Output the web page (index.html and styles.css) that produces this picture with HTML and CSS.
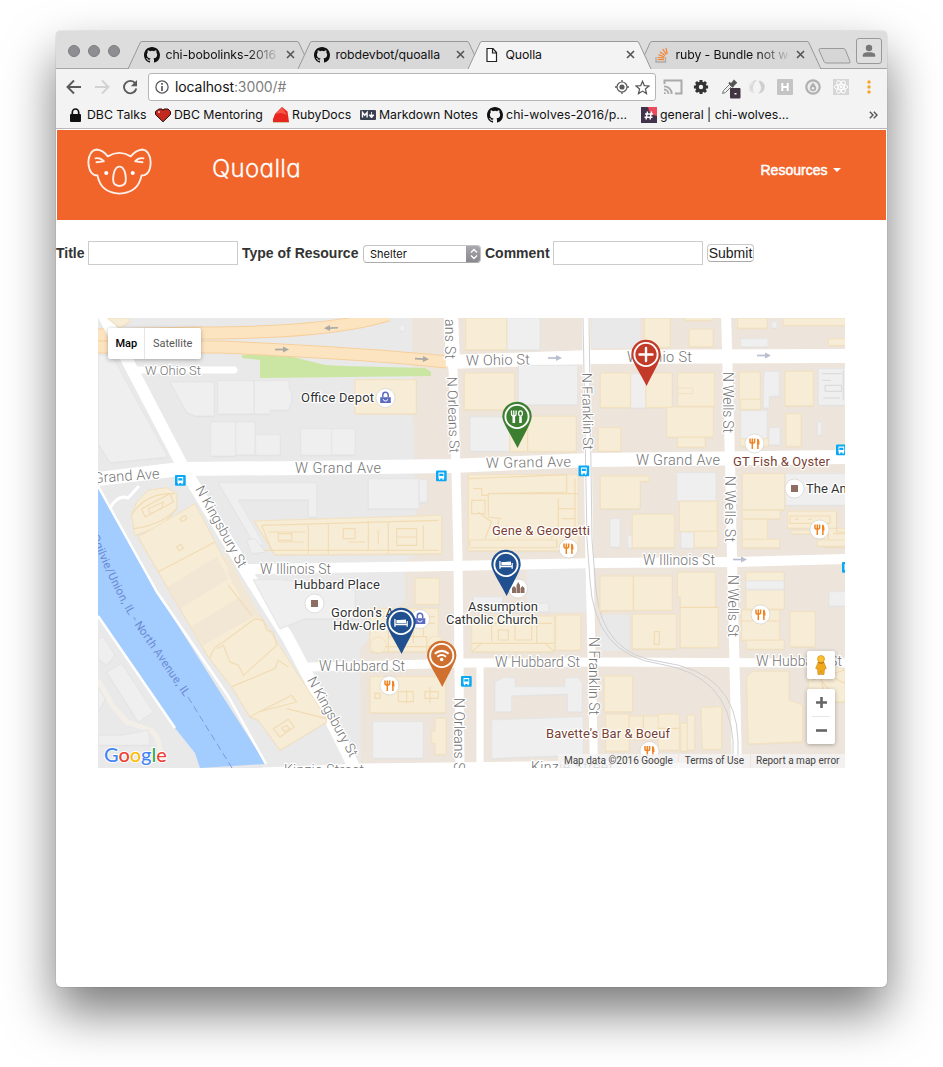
FILE: index.html
```html
<!DOCTYPE html>
<html lang="en">
<head>
<meta charset="utf-8">
<title>Quolla</title>
<link rel="stylesheet" href="styles.css">
</head>
<body>
<svg class="defs" width="0" height="0">
  <defs>
    <symbol id="github" viewBox="0 0 16 16"><path fill="#111" d="M8 0C3.58 0 0 3.58 0 8c0 3.54 2.29 6.53 5.47 7.59.4.07.55-.17.55-.38v-1.49c-2.01.37-2.53-.49-2.69-.94-.09-.23-.48-.94-.82-1.13-.28-.15-.68-.52-.01-.53.63-.01 1.08.58 1.23.82.72 1.21 1.87.87 2.33.66.07-.52.28-.87.51-1.07-1.78-.2-3.64-.89-3.64-3.95 0-.87.31-1.59.82-2.15-.08-.2-.36-1.02.08-2.12 0 0 .67-.21 2.2.82a7.6 7.6 0 0 1 4 0c1.53-1.04 2.2-.82 2.2-.82.44 1.1.16 1.92.08 2.12.51.56.82 1.27.82 2.15 0 3.07-1.87 3.75-3.65 3.95.29.25.54.73.54 1.48v2.2c0 .21.15.46.55.38A8.01 8.01 0 0 0 16 8c0-4.42-3.58-8-8-8z"/></symbol>
    <symbol id="close" viewBox="0 0 9 9"><path d="M1 1l7 7M8 1L1 8" stroke="#555" stroke-width="1.6" fill="none"/></symbol>
    <symbol id="tabshape" viewBox="0 0 184 28"><path d="M0 28L12 2Q12.500 .5 14 .5H169Q170.500 .5 171 2L183 28" stroke="#999" stroke-width="1"/></symbol>
  </defs>
</svg>
<div class="window">
  <div class="tabstrip">
    <div class="lights"><i></i><i></i><i></i></div>
    <div class="tabs">
      <div class="tab"><svg class="shape"><use href="#tabshape"/></svg><svg class="fav"><use href="#github"/></svg><span class="label fade">chi-bobolinks-2016</span><svg class="x"><use href="#close"/></svg></div>
      <div class="tab"><svg class="shape"><use href="#tabshape"/></svg><svg class="fav"><use href="#github"/></svg><span class="label">robdevbot/quoalla</span><svg class="x"><use href="#close"/></svg></div>
      <div class="tab active"><svg class="shape"><use href="#tabshape"/></svg><svg class="fav" viewBox="0 0 16 16"><path d="M3 1.500h6l3.500 4v9H3zM8.500 1.500V6h4" fill="#fff" stroke="#222" stroke-width="1.200"/></svg><span class="label">Quolla</span><svg class="x"><use href="#close"/></svg></div>
      <div class="tab"><svg class="shape"><use href="#tabshape"/></svg><svg class="fav" viewBox="0 0 16 16"><path d="M2 10v5h9.500v-5" fill="none" stroke="#aaa" stroke-width="1.300"/><path d="M3.500 12.700h6.500M3.600 10.300l6.500.9M4.400 7.600l6 2.200M6 4.700l5.200 3.900M8.700 2.200l3.600 5.200M12 .8l1.200 6" stroke="#f08a3c" stroke-width="1.300"/></svg><span class="label fade">ruby - Bundle not wo</span><svg class="x"><use href="#close"/></svg></div>
    </div>
    <svg class="newtab" viewBox="0 0 34 16"><path d="M2.500 .5H25q2 0 2.500 1.500L32 13.500q.5 1.500-1 1.500H8.500q-2 0-2.500-1.500L1 2Q.8.500 2.500.5z" fill="#d6d6d6" stroke="#999"/></svg>
    <div class="profile"><svg viewBox="0 0 14 14"><circle cx="7" cy="4" r="3.200" fill="#777"/><path d="M.8 12.700v-1.500C1 8.500 4.500 8.300 7 8.300s6 .2 6.200 2.900v1.500z" fill="#777"/></svg></div>
  </div>
  <div class="toolbar">
    <svg class="nav" viewBox="0 0 16 16"><path d="M15 8H2M8 1.500L1.500 8 8 14.500" fill="none" stroke="#5a5a5a" stroke-width="1.900"/></svg>
    <svg class="nav" viewBox="0 0 16 16"><path d="M1 8h13M8 1.500L14.500 8 8 14.500" fill="none" stroke="#d2d2d2" stroke-width="1.900"/></svg>
    <svg class="nav" viewBox="0 0 16 16"><path d="M13.300 4.500A6.200 6.200 0 1 0 14.300 9.500" fill="none" stroke="#5a5a5a" stroke-width="1.900"/><path d="M15 1v6.200H8.800z" fill="#5a5a5a"/></svg>
    <div class="omnibox">
      <svg width="14" height="14" viewBox="0 0 14 14"><circle cx="7" cy="7" r="6.100" fill="none" stroke="#5a5a5a" stroke-width="1.300"/><path d="M7 3v1.700M7 6v5" stroke="#5a5a5a" stroke-width="1.700"/></svg>
      <span class="url">localhost<em>:3000/#</em></span>
      <svg width="14" height="14" viewBox="0 0 14 14"><circle cx="7" cy="7" r="5" fill="none" stroke="#5a5a5a" stroke-width="1.200"/><circle cx="7" cy="7" r="2.600" fill="#5a5a5a"/><path d="M7 0v2M7 12v2M0 7h2M12 7h2" stroke="#5a5a5a" stroke-width="1.300"/></svg>
      <svg width="15" height="15" viewBox="0 0 15 15"><path d="M7.500 1.300l1.800 4.300 4.700.4-3.600 3 1.100 4.600-4-2.500-4 2.500 1.100-4.600L1 6l4.700-.4z" fill="none" stroke="#555" stroke-width="1.200"/></svg>
    </div>
    <div class="ext">
      <svg width="20" height="16" viewBox="0 0 20 16"><path d="M1.500 5V1.500h17v13H12" fill="none" stroke="#aaa" stroke-width="2"/><path d="M1 7.300A7.500 7.500 0 0 1 8.700 15M1 10.500A4.500 4.500 0 0 1 5.500 15" fill="none" stroke="#aaa" stroke-width="1.800"/><path d="M1 13a2 2 0 0 1 2 2H1z" fill="#aaa"/></svg>
      <svg width="16" height="16" viewBox="0 0 16 16"><circle cx="8" cy="8" r="3.900" fill="none" stroke="#333" stroke-width="3.400"/><g stroke="#333" stroke-width="3"><path d="M8 .9v2.500M8 12.600v2.500M.9 8h2.500M12.600 8h2.500M3 3l1.800 1.800M11.200 11.200L13 13M13 3l-1.800 1.800M4.800 11.200L3 13"/></g></svg>
      <svg width="20" height="20" viewBox="0 0 20 20"><path d="M1.500 14.500l1-3 6-6 2 2-6 6z" fill="#eee" stroke="#777"/><path d="M8 3.500l4.500 4.500M10 5.500l3-3.700 2 2-3.600 3.300z" fill="#555" stroke="#555" stroke-width="1.800"/><rect x="9" y="9" width="10.500" height="10.500" rx="1" fill="#413542"/><rect x="13.500" y="14" width="2" height="1.500" fill="#fff"/></svg>
      <svg width="16" height="16" viewBox="0 0 16 16"><path d="M8 1A7 7 0 0 0 5 14.300Q1.500 7 8 1z" fill="#d9d9d9"/><path d="M9.500 1.500A6.500 6.500 0 0 1 9 14.500Q12.500 12 12 7.500z" fill="#cfcfcf"/><path d="M4 4a4.500 4.500 0 0 0 1.500 9" fill="none" stroke="#e5e5e5" stroke-width="2"/></svg>
      <svg width="16" height="16" viewBox="0 0 16 16"><rect width="16" height="16" rx="1" fill="#c4c4c4"/><path d="M5.300 4v8M10.700 4v8M5 8h6" stroke="#fff" stroke-width="2"/></svg>
      <svg width="16" height="16" viewBox="0 0 16 16"><circle cx="8" cy="8" r="6.700" fill="#eee" stroke="#b0b0b0" stroke-width="2.200"/><path d="M8 3.500q3.200 3.800 3.200 5.500a3.200 3.200 0 0 1-6.400 0Q4.800 7.300 8 3.500z" fill="#b0b0b0"/><circle cx="8" cy="9.300" r="1.300" fill="#eee"/></svg>
      <svg width="16" height="16" viewBox="0 0 16 16"><rect width="16" height="16" fill="#d6d6d6"/><g fill="none" stroke="#fff"><ellipse cx="8" cy="8" rx="6.800" ry="2.600"/><ellipse cx="8" cy="8" rx="6.800" ry="2.600" transform="rotate(60 8 8)"/><ellipse cx="8" cy="8" rx="6.800" ry="2.600" transform="rotate(120 8 8)"/></g><circle cx="8" cy="8" r="1.400" fill="#fff"/></svg>
    </div>
    <svg class="menu" width="4" height="14" viewBox="0 0 4 14"><g fill="#f5a623"><circle cx="2" cy="2" r="1.700"/><circle cx="2" cy="7" r="1.700"/><circle cx="2" cy="12" r="1.700"/></g></svg>
  </div>
  <div class="bookmarks">
    <div class="bm"><svg viewBox="0 0 16 16"><rect x="2" y="7" width="11" height="8" rx="1" fill="#111"/><path d="M4.300 8V5.500a3.200 3.500 0 0 1 6.400 0V8" fill="none" stroke="#111" stroke-width="1.700"/></svg><span>DBC Talks</span></div>
    <div class="bm"><svg viewBox="0 0 16 16"><path d="M4 2h3l1 1.500L9 2h4l2.500 2.500v3L8 14.800.5 7.500v-3z" fill="#c22a20" stroke="#2a0a08"/><path d="M3 4h2v2H3z" fill="#f29a90"/></svg><span>DBC Mentoring</span></div>
    <div class="bm"><svg viewBox="0 0 16 16"><path d="M9 0l5.500 4.500L16 15H0v-3l2-5z" fill="#e8251f"/><path d="M9 0l-7 7 6-1 6 2z" fill="#f5554a"/><path d="M0 15.500h16" stroke="#cfc79f"/></svg><span>RubyDocs</span></div>
    <div class="bm"><svg viewBox="0 0 16 16"><rect y="3" width="16" height="10" rx="1" fill="#3a4252"/><path d="M2.500 10.500v-5l2.300 2.700 2.300-2.700v5" fill="none" stroke="#fff" stroke-width="1.400"/><path d="M11.500 5v4M9 8h5l-2.500 3z" fill="#fff" stroke="#fff" stroke-width=".8"/></svg><span>Markdown Notes</span></div>
    <div class="bm"><svg><use href="#github"/></svg><span class="wide">chi-wolves-2016/p...</span></div>
    <div class="bm"><svg viewBox="0 0 16 16"><rect width="16" height="16" fill="#43324b"/><path d="M7 0h9v9q-8-1-9-9z" fill="#ec4b5d"/><path d="M6.500 4.500l-1.500 8M10.500 4.500l-1.500 8M4 7h8M3.500 10.200h8" stroke="#fff" stroke-width="1.400"/></svg><span>general | chi-wolves...</span></div>
    <svg class="more" width="9" height="8" viewBox="0 0 9 8"><path d="M.8.800L4 4 .8 7.200M4.800.8L8 4 4.800 7.200" fill="none" stroke="#555" stroke-width="1.400"/></svg>
  </div>
  <header class="site-header">
    <svg class="koala" viewBox="0 0 66 50"><g fill="none" stroke="#fff" stroke-width="1.900" stroke-linecap="round" stroke-linejoin="round" opacity=".9"><path d="M21 8.500Q33 1.500 44.500 8.500Q50 2 56.500 1.500Q64 2.500 64.800 14.500Q64.500 28 55.500 28Q52 46 33 46.500Q14 46 10.500 28Q2 28 1.200 14.500Q2 2.500 9.500 1.500Q16 2 21 8.500z"/><path d="M33 19c5 0 6.500 8 6.500 13s-2.500 6.800-6.500 6.800-6.500-1.800-6.500-6.800S28 19 33 19z"/><path d="M8.500 10.500q5-1 8.500 3M9.500 14.500q3.500 0 7-.8M57.500 10.500q-5-1-8.500 3M56.500 14.500q-3.500 0-7-.8"/></g><circle cx="19.500" cy="25.500" r="2.100" fill="#fff"/><circle cx="46.500" cy="25.500" r="2.100" fill="#fff"/></svg>
    <h1 class="brand">Quoalla</h1>
    <a class="dropdown">Resources <b class="caret"></b></a>
  </header>
  <form class="resource-form">
    <label class="title">Title</label><input type="text" class="field">
    <label>Type of Resource</label><div class="select"><span>Shelter</span><i><svg width="8" height="12" viewBox="0 0 8 12"><path d="M1 4.500l3-3 3 3M1 7.500l3 3 3-3" fill="none" stroke="#fff" stroke-width="1.300"/></svg></i></div>
    <label class="comment">Comment</label><input type="text" class="field">
    <button type="button" class="submit">Submit</button>
  </form>
  <div class="map">
    <svg class="tiles" viewBox="98 318 747 450">
      <defs>
        <g id="bus"><rect width="10.700" height="10.700" rx="1" fill="#0ba9f5"/><path d="M2.500 2h5.700v6H2.500zM3 8h1.200v1.200H3zM6.500 8h1.200v1.200H6.500z" fill="#fff"/><path d="M3.300 3.200h4.100v2.300H3.300z" fill="#0ba9f5"/></g>
        <g id="food"><circle r="9.500" fill="#fff" class="poi"/><path d="M-4.500-5v3.300q0 1.400 2.300 1.400T.1-1.700V-5M-2.200-5V5.500M3.400 5.500V-4.200" fill="none" stroke="#ee8322" stroke-width="1.500"/><path d="M2.700-5q2.500.5 2.300 6H2.700z" fill="#ee8322"/></g>
        <g id="place"><circle r="9.500" fill="#fff" class="poi"/><rect x="-3.500" y="-3.500" width="7" height="7" fill="#8d6e63"/></g>
        <g id="shop"><circle r="9.500" fill="#fff" class="poi"/><path d="M-5.300-.8H5.300V5H-5.300z" fill="#5c6bc0"/><path d="M-2.700-1v-2a2.700 2.700 0 0 1 5.400 0v2" fill="none" stroke="#5c6bc0" stroke-width="1.500"/><path d="M-2.200 1.200a2.200 1.800 0 0 0 4.400 0" fill="none" stroke="#fff"/></g>
        <g id="arrow"><path d="M-7 0H2" stroke="currentColor" stroke-width="1.700"/><path d="M1-3L7 0 1 3z" fill="currentColor"/></g>
        <g id="pin"><path d="M-14.700 0A14.700 14.700 0 1 1 14.700 0C14.700 6 7 18 .6 31.500C-6 18-14.700 6-14.700 0z"/><circle r="11.600" fill="none" stroke="#fff" stroke-width="1.900"/></g>
        <g id="bed" fill="#fff" stroke="none"><path d="M-6.700-3.500h1.300V1.200H5.600V-1.500H6.800V4.200H5.600V2.800H-5.400V4.200H-6.700z"/><path d="M-4.600-2.500h3L5-3V.7H-4.600z"/></g>
        <path id="river-route" d="M91 536Q116 598 138 630T192 708"/>
      </defs>
      <path class="base" d="M98 318h747v450H98z"/>
      <path class="district" d="M412 318H845V768H361L360 648 405 600 404 562 416 555V510L414 455 412 385z"/>
      <path class="base" d="M527 564h62v48h-62zM592 318h48v30h-48zM600 615h29v36h-29z"/>
      <path d="M98 486L128 540 157 592 225 700 266 764 200 768 195 753 175 728 98 616z" fill="#a3ccff"/>
      <path d="M188 697L232 768" stroke="#7c9ae6" stroke-dasharray="7 4" fill="none"/>
      <path d="M98 486L128 540 157 592 228 696 266 764M98 616L175 728" class="path"/>
      <path d="M98 680L112 705 127 722 148 729Q160 735 160 752" fill="none" stroke="#f3efe8" stroke-width="5"/>
      <path d="M242 355H285L325 365 345 366 425 368 431 372V376L260 378V360L242 358z" fill="#cbe6a3"/>
      <g class="hw-edge"><path d="M98 335L200 333Q330 333 388 315M98 347H220Q355 353 447 362"/></g>
      <g class="hw"><path d="M98 335L200 333Q330 333 388 315M98 347H220Q355 353 447 362"/></g>
      <g class="roads">
        <path d="M448 362L590 357 845 356" stroke-width="14"/>
        <path d="M98 479L180 469 300 468 450 466 590 460 845 457" stroke-width="14"/>
        <path d="M248 569L450 566 600 563 735 562 845 559" stroke-width="10"/>
        <path d="M308 667L470 663 600 662 845 663" stroke-width="9"/>
        <path d="M262 772L362 768 600 765 740 769" stroke-width="9"/>
        <path d="M102 312L182 465 250 578 288 638 318 695 358 775" stroke-width="12"/>
        <path d="M451 312L453 366" stroke-width="14"/><path d="M453 366L456 470 458 560 460 768" stroke-width="9"/>
        <path d="M480 665V768" stroke-width="7"/>
        <path d="M586 312L589 540 594 768" stroke-width="8"/>
        <path d="M726 312L730 460 732 560 737 768" stroke-width="10"/>
        <path d="M137 370H234" stroke-width="7" stroke-linecap="round"/>
        <path d="M110 508Q118 494 128 498L139 486" stroke-width="3"/>
      </g>
      <path class="rail" d="M583 318L587 540 590 580Q594 655 660 664 728 675 733 740V768M589 318L592 540 596 590Q602 655 662 662 736 672 738 740V768"/>

      <g transform="translate(95 312) scale(.33333)">
        <g class="gray"><path d="M10 130H50L218 435 45 452 10 395zM225 210H358V312H300L275 300zM368 206h110v100H368zM478 206H583V235L590 240V265L580 295H525V306H478zM347 330h75v102h-75zM422 330h58v98h-58zM482 368h74v62h-74zM617 350h158v80H617zM370 512H665V615H640V563H430L507 700H480z"/></g>
        <g class="beige"><path d="M38 18H98L105 28 75 48z"/><path d="M478 627L1040 610V725L540 728z"/><path d="M110 610L125 570 160 535 215 527 245 545V590L200 640 120 670z"/><path d="M130 675L300 575 399 765 692 1215 695 1230 555 1314 490 1224 465 1214 410 1124 340 1034 190 779z"/></g>
        <g fill="#f2e6d4"><path d="M220 824L365 734 400 800 255 890zM290 944L445 849 475 914 325 1000zM385 700L440 810 500 920 470 910 400 790z"/></g>
        <g class="detail"><path d="M190 779L360 690M345 1040Q350 1005 385 990L480 920 505 925 515 955 535 960 545 1000 445 1090 430 1060 405 1050 385 1000 365 1010M400 820L470 910M410 1124L540 1070 550 1045 580 1065M465 1214L590 1150 605 1170 490 1200M575 1190L695 1220M535 1250L580 1222 598 1245 555 1275zM560 1248l15-8 8 10-15 9zM255 620l15-10 6 10-16 9zM245 705l12-9 8 12-12 9z"/><path d="M110 610Q150 540 240 545M140 590L225 545 235 570 150 615zM160 590L205 570 200 590 165 605zM115 650Q200 640 245 590"/><path d="M500 640L1030 625M500 640L530 715M500 715H1030M640 635V725M700 632V725M745 650h35v30h-35zM820 628V715M880 628V725M905 650h60v50h-60zM985 640v70M630 660H520M625 690H550M760 690h50M850 655v40M905 675h60M590 665h-40v20h40z"/></g>
        <g class="gray"><path d="M10 980L25 975 60 1030 35 1060 10 1040zM35 1080L80 1055 175 1200 130 1230zM10 1130L30 1160 10 1200zM10 1270H80L160 1255 165 1300H10zM475 803H560L780 830V920H630L555 950zM455 685L480 680 510 720 470 725z"/></g>
      </g>
      <g transform="translate(345 312) scale(.33333)">
        <g class="gray"><path d="M485 18h100v95H485zM520 160h178v118H520zM375 315h120v103H375zM70 500h152v90H70zM222 503h25v68h-25zM-40 350h70v78h-70z"/><circle cx="171" cy="48" r="10"/></g>
        <g class="beige"><path d="M30 203h183v102H30zM362 18h123v95H362zM358 183h150v110H358zM495 313h198v105H495zM370 488h330v228H370z"/></g>
        <g class="detail"><path d="M548 313V418M370 500L665 488V540L430 545V615L470 620M385 530h25v20h20M380 565h40v40h-40zM400 600l40 30-20 50M430 545H700M460 625V705H620V670H700M640 560V670M690 500v150M370 690H460M640 590h50M650 620h40"/></g>
      </g>
      <g transform="translate(595 312) scale(.33333)">
        <g class="gray"><path d="M107 185h46v103h-46zM245 482h118v85H245zM258 658h40v50h-40zM45 620h30v85H45zM98 670h14v38H98zM437 80h82v24h-82zM530 28h16v20h-16zM508 178h45v75h-30v35h-18v-35zM437 295h80v85h-80zM522 347h33v52h-33zM667 330h13v40h-13zM570 485h185v95H570zM670 170h85v110h-85z"/></g>
        <g class="beige"><path d="M148 18h77v88h-77zM282 52h72v52h-72zM270 14h82v11h-82zM16 183h90v103H16zM153 183h78v103h-78zM248 183H358V282H248V228H293V245H248zM215 285h140v90H215zM247 375h83v30h-83zM10 347h67v70H10zM16 492H163V507H135V590H16zM253 568h113v90H253zM298 658h70v48h-70zM112 607h126v100H112zM428 18h88v30h-88zM565 18h190v22H565zM700 80h55v20h-55zM433 180h62v82h-62zM437 262h60v30h-60zM570 178h85v103h-85zM573 305h45v98h-45zM437 380h83v22h-83zM442 485h127v108H442zM442 595h113v25H442zM442 622h75v60h-75zM442 682h112v25H442zM578 598h147v50H578zM688 650h67v55h-67zM590 655h90v10h-90z"/></g>
        <g class="detail"><path d="M585 612h120v22H585zM600 622h10M640 622h10M700 660v45M725 600v60h30M715 665h40"/></g>
        <path class="roof" d="M682 185h58M682 205h25M690 220h50v18h-50zM685 258h50M745 175v90"/>
      </g>
      <g transform="translate(345 540) scale(.33333)">
        <g class="gray"><path d="M83 545h152v110H83zM385 170h88v20h138v25H385zM450 425L480 412 510 415V440H660V415L700 412 712 430V515H667V462L500 467V515H450zM440 540L715 530V645L440 655z"/></g>
        <g class="beige"><path d="M375 0H635V22H375zM210 115h73v78h-73zM75 205H280V310L295 320 280 335H75L75 300zM75 410H302V518H75zM270 535H303V643H270V610H260V575H270zM380 228H628V335H380zM632 225h75v105h-75zM765 108h20v105h-20z"/><circle cx="100" cy="315" r="24"/><circle cx="272" cy="312" r="24"/></g>
        <g class="detail"><path d="M120 320H255M90 230H270M90 250H270M130 340V290H245V340M130 240v50M170 270v40M205 270v40M235 240v50M380 310H628M390 250H620M440 235v70M510 250h50v50h-50zM460 270h30v30h-30zM575 240v70M380 335L410 310M628 335L600 310M90 460h15v15H90zM160 455h45v30h-45zM185 450v40M240 455h40v20h-40zM255 440v50M635 0V22"/></g>
      </g>
      <g transform="translate(595 540) scale(.33333)">
        <g class="beige"><path d="M15 108h217v103H15zM247 97H361V202H370V322H256V170H247zM112 223h132v103H112zM453 97h114v110H453zM440 210h113v90H440zM455 300h112v27H455zM585 215h75v105h-75zM455 410L475 394H582V480L623 495V605L460 612zM640 390L700 370 750 390V485H640zM28 408h85v107H28zM32 523h70v110H32zM102 528h88v70h-88zM190 523h63v107h-63zM257 550h20v83h-20zM277 525h22v105h-22zM318 503L380 500V628H322zM667 0h85v18h-85z"/></g>
        <g class="gray"><path d="M453 123h114v25H453zM702 155h50v43h-50z"/></g>
        <g class="detail"><path d="M115 108V211M256 202H370M178 275h15v38h-15zM440 243H553M500 210v33M145 528v60M190 565h63M700 380q-40 40 0 90M680 380q40 40 70 50M650 420l100-30M660 400l60 70"/></g>
      </g>

      <g color="#aaa9a4">
        <use href="#arrow" transform="translate(331 328) rotate(178)"/><use href="#arrow" transform="translate(282 349.500)"/><use href="#arrow" transform="translate(422 359) rotate(3)"/>
      </g>
      <g color="#b9bfce"><use href="#arrow" transform="translate(555 358)"/><use href="#arrow" transform="translate(764 355.500)"/><use href="#arrow" transform="translate(740 559.500)"/></g>

      <g class="street">
        <text x="145" y="374.500" class="s" textLength="56">W Ohio St</text>
        <text x="466" y="365.500" textLength="64" transform="rotate(-1 466 365)">W Ohio St</text>
        <text x="627" y="362" textLength="65">W Ohio St</text>
        <text x="94" y="483" textLength="66" transform="rotate(-4 94 483)">Grand Ave</text>
        <text x="295" y="473" textLength="86">W Grand Ave</text>
        <text x="486" y="468" textLength="85" transform="rotate(-1 486 468)">W Grand Ave</text>
        <text x="636" y="465" textLength="84">W Grand Ave</text>
        <text x="260" y="574" class="m" textLength="71">W Illinois St</text>
        <text x="643" y="565" class="m" textLength="72">W Illinois St</text>
        <text x="319" y="670.500" class="m" textLength="86">W Hubbard St</text>
        <text x="495" y="667" class="m" textLength="85">W Hubbard St</text>
        <text x="756" y="666" class="m" textLength="86">W Hubbard St</text>
        <text x="284" y="775" class="m" textLength="80">Kinzie Street</text>
        <text x="531" y="771.500" class="m" textLength="82">Kinzie Street</text>
        <text transform="translate(445 319) rotate(90)" class="m" textLength="40">ans St</text>
        <text transform="translate(447 377) rotate(88)" class="m" textLength="76">N Orleans St</text>
        <text transform="translate(454 698) rotate(90)" class="m" textLength="77">N Orleans St</text>
        <text transform="translate(582 373) rotate(89)" class="m" textLength="77">N Franklin St</text>
        <text transform="translate(589 637) rotate(90)" class="m" textLength="78">N Franklin St</text>
        <text transform="translate(723 372) rotate(90)" class="m" textLength="61">N Wells St</text>
        <text transform="translate(725 476) rotate(90)" class="m" textLength="66">N Wells St</text>
        <text transform="translate(728 575) rotate(90)" class="m" textLength="62">N Wells St</text>
        <text transform="translate(195 489) rotate(61)" class="m" textLength="91">N Kingsbury St</text>
        <text transform="translate(307 680) rotate(61)" class="m" textLength="89">N Kingsbury St</text>
      </g>
      <text class="river"><textPath href="#river-route" textLength="187">Ogilvie/Union, IL - North Avenue, IL</textPath></text>

      <use href="#bus" x="175" y="475"/><use href="#bus" x="436" y="470.500"/><use href="#bus" x="578.500" y="465.500"/><use href="#bus" x="836" y="444.500"/><use href="#bus" x="461" y="676"/><use href="#bus" x="842" y="562"/>
      <use href="#food" x="754.500" y="443.500"/><use href="#food" x="819.500" y="529.500"/><use href="#food" x="568.500" y="548.500"/><use href="#food" x="389.500" y="685.500"/><use href="#food" x="760.500" y="614.500"/><use href="#food" x="649.500" y="751"/>
      <use href="#place" x="794.500" y="488.500"/><use href="#place" x="314.500" y="603.500"/>
      <use href="#shop" x="385.500" y="398"/><use href="#shop" x="420" y="619"/>
      <circle cx="518" cy="588.500" r="9.500" fill="#fff" class="poi"/><path d="M512 593v-5l2-2 2 2v5zM516.500 593v-8l1.700-3 1.800 3v8zM520.500 593v-5l2-2 2 2v5z" fill="#8d6e63"/>

      <g class="biz">
        <text x="301" y="402" textLength="73">Office Depot</text>
        <text x="294" y="589" textLength="86">Hubbard Place</text>
        <text x="331" y="616.500" textLength="63">Gordon's A</text>
        <text x="333" y="629.500" textLength="53">Hdw-Orle</text>
        <text x="468" y="610.500" textLength="70">Assumption</text>
        <text x="446" y="623.500" textLength="92">Catholic Church</text>
        <text x="806" y="493">The An</text>
      </g>
      <g class="biz eat">
        <text x="733" y="465.500" textLength="97">GT Fish &amp; Oyster</text>
        <text x="492" y="535" textLength="98">Gene &amp; Georgetti</text>
        <text x="546" y="738" textLength="124">Bavette's Bar &amp; Boeuf</text>
      </g>

      <g transform="translate(517 416.500)" fill="#3d7f31"><use href="#pin"/><g stroke="#fff" fill="none" stroke-width="1.300"><path d="M-5.500-6v3.500q0 2 2.300 2t2.300-2V-6M-3.200-6V-1"/><path d="M-3.200-.5V6.500" stroke-width="2.600"/><ellipse cx="3.500" cy="-3" rx="1.900" ry="2.700"/><path d="M3.500 0V6.500" stroke-width="2.600"/></g></g>
      <g transform="translate(646 354.500)" fill="#c33a28"><use href="#pin"/><path d="M-6.500 0H6.500M0-6.500V6.500" stroke="#fff" stroke-width="2.400" stroke-linecap="round"/></g>
      <g transform="translate(506 564.500)" fill="#20508f"><use href="#pin"/><use href="#bed"/></g>
      <g transform="translate(401 622.500)" fill="#20508f"><use href="#pin"/><use href="#bed"/></g>
      <g transform="translate(441.700 655.500)" fill="#d0702e"><use href="#pin"/><path d="M-7-1.800Q0-7.500 7-1.800M-4.300 1.200Q0-2.200 4.300 1.200" fill="none" stroke="#fff" stroke-width="2"/><circle cy="4" r="1.800" fill="#fff"/></g>
    </svg>
    <div class="maptype"><span class="on">Map</span><span>Satellite</span></div>
    <div class="google"><span class="gb">G</span><span class="gr">o</span><span class="gy">o</span><span class="gb">g</span><span class="gg">l</span><span class="gr">e</span></div>
    <div class="controls">
      <div class="pegman"><svg width="12" height="20" viewBox="0 0 12 20"><path d="M3 7.500H9L11.300 13.500 9.500 14 9 19.500H6.500L6 15.500 5.500 19.500H3L2.500 14 .7 13.500z" fill="#f0a81c" stroke="#c98512" stroke-width=".6"/><circle cx="6" cy="4" r="3.500" fill="#fbc02d" stroke="#c98512" stroke-width=".6"/><path d="M3 7.300Q6 9.500 9 7.300" fill="none" stroke="#b2700a"/></svg></div>
      <div class="zoom"><svg width="28" height="27" viewBox="0 0 28 27"><path d="M9 13.500h11M14.500 8v11" stroke="#666" stroke-width="2.600"/></svg><hr><svg width="28" height="27" viewBox="0 0 28 27"><path d="M9 13.500h11" stroke="#666" stroke-width="2.600"/></svg></div>
    </div>
    <div class="credits"><span>Map data ©2016 Google</span><span>Terms of Use</span><span>Report a map error</span></div>
  </div>
</div>
</body>
</html>
```

FILE: styles.css
```css
* { box-sizing: border-box; }
html, body { margin: 0; }
body { width: 943px; height: 1067px; background: #fff; overflow: hidden; padding: 31px 0 0 56px; font-family: "Liberation Sans", Arial, sans-serif; }
.defs { position: absolute; }
svg { flex: none; display: block; }
.window { width: 831px; height: 956px; background: #fff; border-radius: 5px; box-shadow: 0 0 1px rgba(0,0,0,.5), 0 25px 50px rgba(0,0,0,.53); display: flex; flex-direction: column; }

/* browser chrome */
.tabstrip { height: 38px; background: #dddddd; border-radius: 5px 5px 0 0; border-bottom: 1px solid #a5a5a5; display: flex; align-items: flex-start; flex: none; }
.lights { display: flex; gap: 8px; padding: 14px 0 0 12px; width: 72px; }
.lights i { width: 12px; height: 12px; border-radius: 50%; background: #8e8d92; border: 1px solid #7d7c81; }
.tabs { display: flex; padding-top: 9.500px; }
.tab { position: relative; width: 184px; height: 28px; margin-right: -14px; display: flex; align-items: center; padding: 0 17px 0 16px; flex: none; }
.tab:last-child { margin-right: 0; }
.tab .shape { position: absolute; left: 0; top: 0; width: 184px; height: 28px; fill: #d8d8d8; }
.tab.active { z-index: 2; }
.tab.active .shape { fill: #f3f3f3; }
.tab.active::after { content: ""; position: absolute; left: 1px; right: 2px; bottom: -1px; height: 2px; background: #f3f3f3; }
.fav { width: 16px; height: 16px; position: relative; }
.label { position: relative; margin-left: 5.500px; width: 117px; height: 18px; font: 12.300px/18px Inter, sans-serif; letter-spacing: -.1px; color: #111; white-space: nowrap; overflow: hidden; margin-right: 7px; }
.label.fade { -webkit-mask-image: linear-gradient(90deg, #000 72%, transparent 102%); mask-image: linear-gradient(90deg, #000 72%, transparent 102%); }
.tab .x { position: relative; width: 9px; height: 9px; }
.newtab { width: 34px; height: 16px; margin: 17px 0 0 -4px; }
.profile { width: 26px; height: 26px; margin: 7px 0 0 4px; border: 1px solid #999; border-radius: 3px; background: #dfdfdf; display: flex; align-items: center; justify-content: center; }
.profile svg { width: 14px; height: 14px; }
.toolbar { height: 34px; background: #f3f3f3; display: flex; align-items: center; padding: 2px 0 0 10px; flex: none; }
.nav { width: 16px; height: 16px; margin-right: 12px; }
.omnibox { width: 508px; height: 28px; margin-left: -2px; border: 1px solid #b5b5b5; border-radius: 3px; background: #fff; display: flex; align-items: center; padding: 0 5px 0 6px; gap: 6px; }
.url { flex: 1; font: 14px/20px Inter, sans-serif; color: #111; letter-spacing: -.1px; }
.url em { font-style: normal; color: #808080; }
.ext { display: flex; align-items: center; gap: 12px; margin-left: 7px; }
.ext svg:nth-child(2) { margin-left: -2px; }
.ext svg:nth-child(3) { margin: 4px -4px 0 0; }
.menu { margin-left: 18px; }
.bookmarks { height: 26px; background: #f3f3f3; border-bottom: 1px solid #b9b9b9; display: grid; grid-template-columns: 87px 118px 87px 127px 154px 228px auto; align-items: center; padding: 0 0 1px 12px; flex: none; }
.bm { display: flex; gap: 3px; align-items: center; font: 12.300px/18px Inter, sans-serif; color: #111; white-space: nowrap; }
.bm svg { width: 16px; height: 16px; }
.bm .wide { letter-spacing: .1px; }
.more { margin-left: -.5px; }

/* site header */
.site-header { height: 90px; margin: 1px 1px 0; background: #f1652a; display: flex; align-items: flex-start; flex: none; color: #fff; }
.koala { width: 65px; height: 49px; margin: 18px 1px 0 29.500px; }
.brand { margin: 22px 0 0 59.500px; width: 400px; font: 300 24px/34px Inter, sans-serif; font-feature-settings: "cv11"; letter-spacing: .35px; -webkit-text-stroke: .3px #fff; }
.dropdown { margin: 30px 0 0 148.500px; font-size: 14px; line-height: 20px; -webkit-text-stroke: .5px #fff; display: flex; align-items: center; white-space: nowrap; }
.caret { margin-left: 6px; border-top: 4px solid #fff; border-left: 4px solid transparent; border-right: 4px solid transparent; }

/* form */
.resource-form { height: 24px; margin-top: 21px; display: flex; align-items: center; gap: 4px; font-size: 14px; flex: none; }
.resource-form label { font-weight: bold; color: #333; white-space: nowrap; width: 117px; }
.resource-form .title { width: 28px; }
.resource-form .comment { width: 64px; }
.field { width: 150px; height: 24px; border: 1px solid #ccc; padding: 0; background: #fff; }
.select { width: 118px; height: 18px; margin-top: 2px; border: 1px solid #c4c4c4; border-bottom-color: #aaa; border-radius: 4px; display: flex; overflow: hidden; font: 11px/16px Inter, sans-serif; color: #111; }
.select span { flex: 1; padding-left: 6px; }
.select i { width: 15px; margin: -1px; height: 18px; background: linear-gradient(#aaaab0, #86868c); display: flex; align-items: center; justify-content: center; }
.submit { width: 47px; height: 18px; padding: 0; border: 1px solid #c8c8c8; border-bottom-color: #aaa; border-radius: 4px; background: #fff; font: 14px/16px "Liberation Sans", sans-serif; color: #222; }

/* map */
.map { position: relative; width: 747px; height: 450px; margin: 53px 0 0 42px; overflow: hidden; flex: none; }
.tiles { width: 747px; height: 450px; font-family: Roboto, sans-serif; }
.base { fill: #e9e9e9; }
.district { fill: #ede5db; }
.path { fill: none; stroke: #fff; stroke-width: 2.500; }
.hw-edge { fill: none; stroke: #f6cf9b; stroke-width: 13; }
.hw { fill: none; stroke: #fde4c1; stroke-width: 11; }
.roads { fill: none; stroke: #fff; stroke-linejoin: round; }
.rail { fill: none; stroke: #cfd0d4; stroke-width: 1; }
.gray { fill: #efefef; stroke: #e4e4e4; stroke-width: 2; filter: drop-shadow(0 1.500px 0 #dfdfe0); }
.beige { fill: #f7ecd6; stroke: #f2e2c2; stroke-width: 3; filter: drop-shadow(0 1.500px 0 #ebd9bd); }
.detail { fill: none; stroke: #f1dcb4; stroke-width: 3.500; }
.roof { fill: none; stroke: #d8d8d8; stroke-width: 3; }
.poi { stroke: #ccc; stroke-width: .6; }
.street text { fill: #747474; font-size: 14.500px; font-weight: 300; stroke: #fff; stroke-width: 2.500px; paint-order: stroke; stroke-linejoin: round; }
.street text.m { font-size: 14px; }
.street text.s { font-size: 13px; }
.river { font-size: 11.500px; fill: #6b8ad4; }
.biz text { font-size: 13px; fill: #333; stroke: #fff; stroke-width: 2.500px; paint-order: stroke; stroke-linejoin: round; }
.biz.eat text { fill: #7a3f33; }
.maptype { position: absolute; left: 10px; top: 10px; height: 31px; width: 93px; display: flex; background: #fff; border-radius: 2px; box-shadow: 0 1px 4px rgba(0,0,0,.3); font: 11px/31px Roboto, sans-serif; color: #565656; }
.maptype span { padding: 0 8px; }
.maptype .on { color: #000; font-weight: 500; width: 37px; padding-left: 7.500px; border-right: 1px solid #e6e6e6; }
.google { position: absolute; left: 6px; top: 424px; font: 500 20px/24px Lato, sans-serif; letter-spacing: -.05px; -webkit-text-stroke: 2px #fff; paint-order: stroke fill; }
.gb { color: #4285f4; } .gr { color: #ea4335; } .gy { color: #fbbc05; } .gg { color: #34a853; }
.controls { position: absolute; left: 709px; top: 333px; display: flex; flex-direction: column; gap: 10px; }
.pegman, .zoom { width: 28px; background: #fff; border-radius: 2px; box-shadow: 0 1px 4px rgba(0,0,0,.3); }
.pegman { height: 28px; display: flex; align-items: center; justify-content: center; }
.zoom { height: 55px; }
.zoom hr { margin: 0 5px; border: 0; height: 1px; background: #e6e6e6; }
.credits { position: absolute; right: 0; bottom: 0; height: 14px; display: flex; gap: 1px; font: 10px/14px Roboto, sans-serif; color: #444; }
.credits span { background: rgba(245,245,245,.78); padding: 0 5.500px; white-space: nowrap; }
```
